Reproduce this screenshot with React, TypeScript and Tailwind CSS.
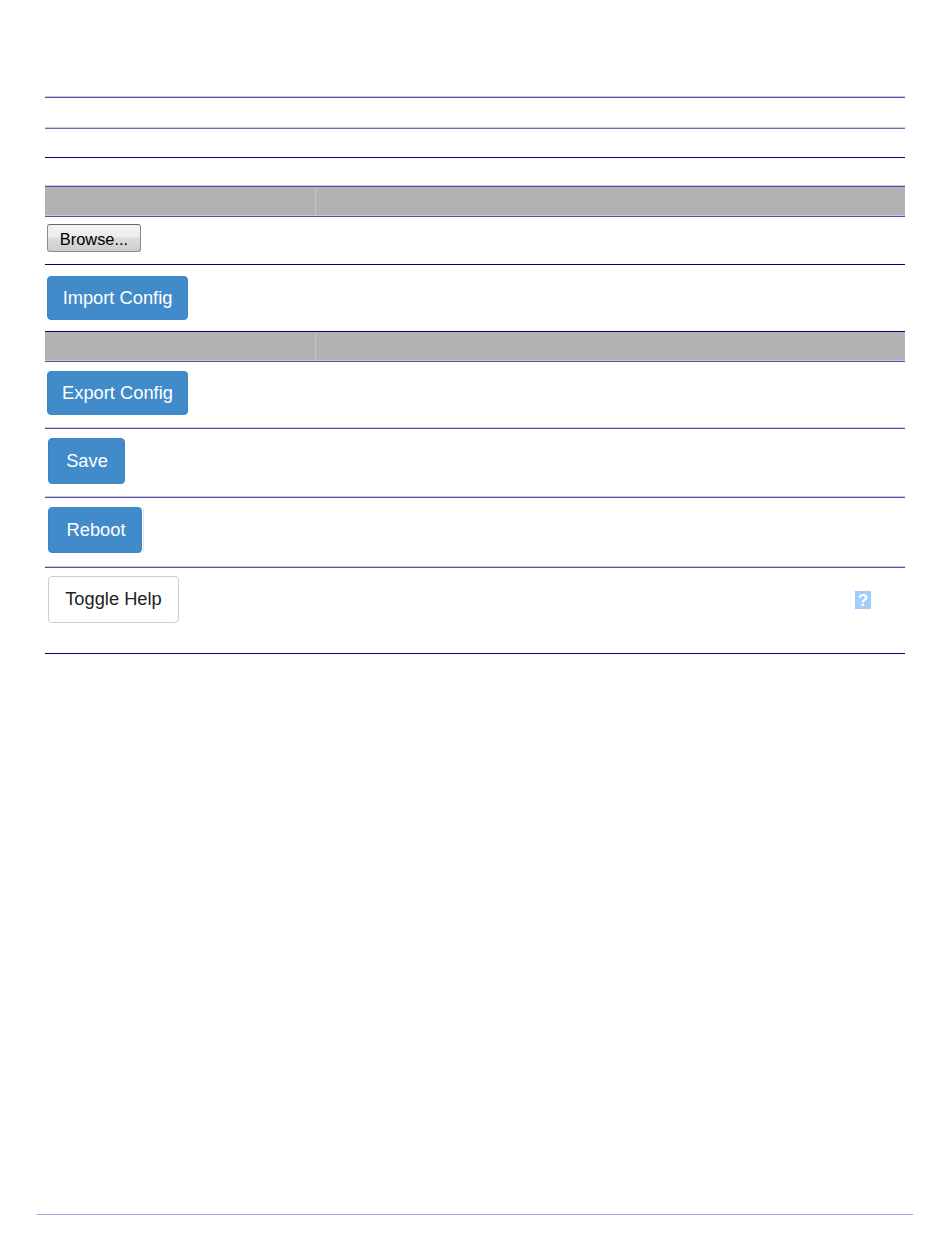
const btn = "flex items-center justify-center rounded-[4px] bg-[#428bca] border border-[#3d85c4] text-white text-[18.3px] leading-none";
const soft = "border-[#5252ac] shadow-[0_-1px_0_#c9c9e4]";
const navy = "border-[#00008b]";

function Row({ h, line, children }: { h: string; line: string; children?: React.ReactNode }) {
  return <div className={`${h} ${line} border-t box-border`}>{children}</div>;
}

function HeaderRow({ line }: { line: string }) {
  return (
    <div className={`h-[30px] ${line} border-t box-border flex bg-[#b2b2b2]`}>
      <div className="w-[271px] border-r border-[#c4c4c4]" />
      <div className="flex-1" />
    </div>
  );
}

export default function App() {
  return (
    <div className="relative h-[1260px] w-[950px] bg-white flex flex-col font-['Liberation_Sans',Arial,sans-serif]">
      <div className="ml-[45px] mt-[97px] w-[860px]">
        <Row h="h-[31px]" line={soft} />
        <Row h="h-[29px]" line="border-[#6a6ab6] shadow-[0_-1px_0_#c9c9e4]" />
        <Row h="h-[29px]" line={navy} />
        <HeaderRow line={soft} />
        <Row h="h-[48px]" line={soft}>
          <div className="pl-[2px] pt-[7px]">
            <button className="flex items-center justify-center w-[94px] h-[28px] pt-[2px] rounded-[3px] border border-[#8a8a8a] border-t-[#666666] bg-[linear-gradient(#f4f4f4_0%,#ececec_45%,#dcdcdc_50%,#cdcdcd_100%)] text-[16.4px] text-black leading-none">
              Browse...
            </button>
          </div>
        </Row>
        <Row h="h-[67px]" line={navy}>
          <div className="pl-[2px] pt-[11px]">
            <button className={`${btn} w-[141px] h-[44px]`}>Import Config</button>
          </div>
        </Row>
        <HeaderRow line={navy} />
        <Row h="h-[67px]" line={soft}>
          <div className="pl-[2px] pt-[9px]">
            <button className={`${btn} w-[141px] h-[44px]`}>Export Config</button>
          </div>
        </Row>
        <Row h="h-[69px]" line={soft}>
          <div className="pl-[3px] pt-[9px]">
            <button className={`${btn} w-[77px] h-[46px] pl-[1px]`}>Save</button>
          </div>
        </Row>
        <Row h="h-[70px]" line={soft}>
          <div className="pl-[3px] pt-[9px]">
            <button className={`${btn} w-[94px] h-[46px] pl-[2px] shadow-[1px_0_0_#fff,2px_0_0_#dfe6ee]`}>Reboot</button>
          </div>
        </Row>
        <div className="h-[87px] box-border border-t border-b border-t-[#5252ac] border-b-[#00008b] shadow-[0_-1px_0_#c9c9e4] flex justify-between">
          <div className="pl-[3px] pt-[8px]">
            <button className="flex items-center justify-center w-[131px] h-[47px] rounded-[4px] bg-white border border-[#cccccc] text-[#222222] text-[18.3px] leading-none">
              Toggle Help
            </button>
          </div>
          <div className="pt-[23px] pr-[34px]">
            <div className="w-[16px] h-[18px] bg-[#a3cdfb] flex items-center justify-center text-white text-[17px] font-bold leading-none">
              ?
            </div>
          </div>
        </div>
      </div>
      <div className="mt-auto mb-[45px] ml-[37px] w-[876px] border-t border-[#a0a0d2]" />
    </div>
  );
}
